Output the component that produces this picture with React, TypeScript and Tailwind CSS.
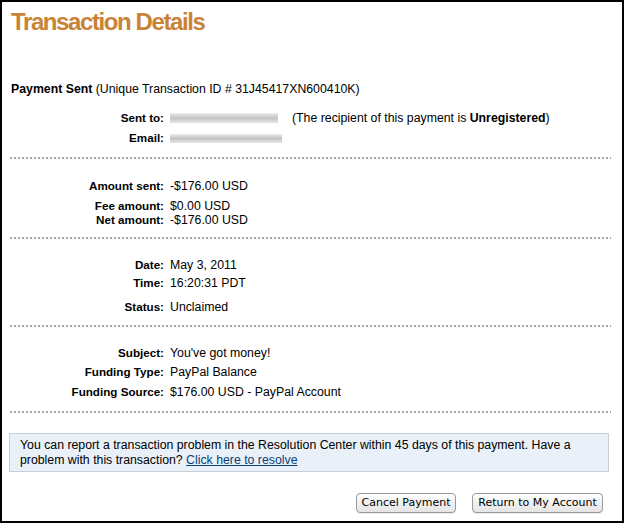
import React from "react";

const Dots = ({ mt }: { mt: string }) => (
  <div
    className={`${mt} ml-[8px] mr-[11px] h-[2px] bg-[repeating-linear-gradient(to_right,#a8a8a8_0px,#a8a8a8_2px,transparent_2px,transparent_4px)]`}
  />
);

const Row = ({
  label,
  mt,
  children,
}: {
  label: string;
  mt: string;
  children: React.ReactNode;
}) => (
  <div className={`${mt} ml-[8px] flex leading-[14px]`}>
    <div className="w-[154px] shrink-0 text-right font-bold text-[11.65px]">{label}</div>
    <div className="ml-[6px] flex items-center">{children}</div>
  </div>
);

export default function App() {
  return (
    <div
      className="w-[624px] h-[523px] border-2 border-black bg-white text-black text-[12.3px] flex flex-col overflow-hidden"
      style={{ fontFamily: '"Liberation Sans", Arial, Helvetica, sans-serif' }}
    >
      <h1 className="mt-[6px] ml-[9px] text-[24px] leading-[28px] font-bold tracking-[-1.4px] text-[#c98338]">
        Transaction Details
      </h1>

      <div className="mt-[46px] ml-[9px] leading-[14px]">
        <span className="font-bold">Payment Sent</span> (Unique Transaction ID # 31J45417XN600410K)
      </div>

      <Row label="Sent to:" mt="mt-[15px]">
        <span className="relative inline-block w-[108px] h-[10px] bg-[linear-gradient(to_bottom,#ececec,#c4c4c4_50%,#e6e6e6)] blur-[0.6px]" />
        <span className="ml-[14px]">
          (The recipient of this payment is <span className="font-bold">Unregistered</span>)
        </span>
      </Row>
      <Row label="Email:" mt="mt-[6px]">
        <span className="inline-block w-[112px] h-[9px] bg-[linear-gradient(to_bottom,#ececec,#c2c2c2_50%,#e8e8e8)] blur-[0.6px]" />
      </Row>

      <Dots mt="mt-[12px]" />

      <Row label="Amount sent:" mt="mt-[20px]">-$176.00 USD</Row>
      <Row label="Fee amount:" mt="mt-[6px]">$0.00 USD</Row>
      <Row label="Net amount:" mt="mt-0">-$176.00 USD</Row>

      <Dots mt="mt-[10px]" />

      <Row label="Date:" mt="mt-[19px]">May 3, 2011</Row>
      <Row label="Time:" mt="mt-[4px]">16:20:31 PDT</Row>
      <Row label="Status:" mt="mt-[10px]">Unclaimed</Row>

      <Dots mt="mt-[11px]" />

      <Row label="Subject:" mt="mt-[19px]">You've got money!</Row>
      <Row label="Funding Type:" mt="mt-[5px]">PayPal Balance</Row>
      <Row label="Funding Source:" mt="mt-[6px]">$176.00 USD - PayPal Account</Row>

      <Dots mt="mt-[12px]" />

      <div className="mt-[20px] ml-[7px] mr-[13px] border border-[#c7ced6] bg-[#e9f0f8] pl-[10px] pr-[8px] pt-[4px] pb-[3px] leading-[15px]">
        <p>
          You can report a transaction problem in the Resolution Center within 45 days of this payment. Have a
          problem with this transaction?{" "}
          <a href="#" className="text-[#0b3f7a] underline">
            Click here to resolve
          </a>
        </p>
      </div>

      <div
        className="mt-[21px] mr-[19px] flex justify-end gap-[16px]"
        style={{ fontFamily: '"DejaVu Sans", Verdana, sans-serif' }}
      >
        <button className="w-[100px] h-[20px] rounded-[4px] border border-[#9a9a9a] bg-[linear-gradient(to_bottom,#ffffff,#f1f1f1_50%,#e4e4e4)] text-[11px] leading-[18px] text-black shadow-[0_1px_0_rgba(0,0,0,0.08)]">
          Cancel Payment
        </button>
        <button className="w-[131px] h-[20px] rounded-[4px] border border-[#9a9a9a] bg-[linear-gradient(to_bottom,#ffffff,#f1f1f1_50%,#e4e4e4)] text-[11px] leading-[18px] text-black shadow-[0_1px_0_rgba(0,0,0,0.08)]">
          Return to My Account
        </button>
      </div>
    </div>
  );
}
